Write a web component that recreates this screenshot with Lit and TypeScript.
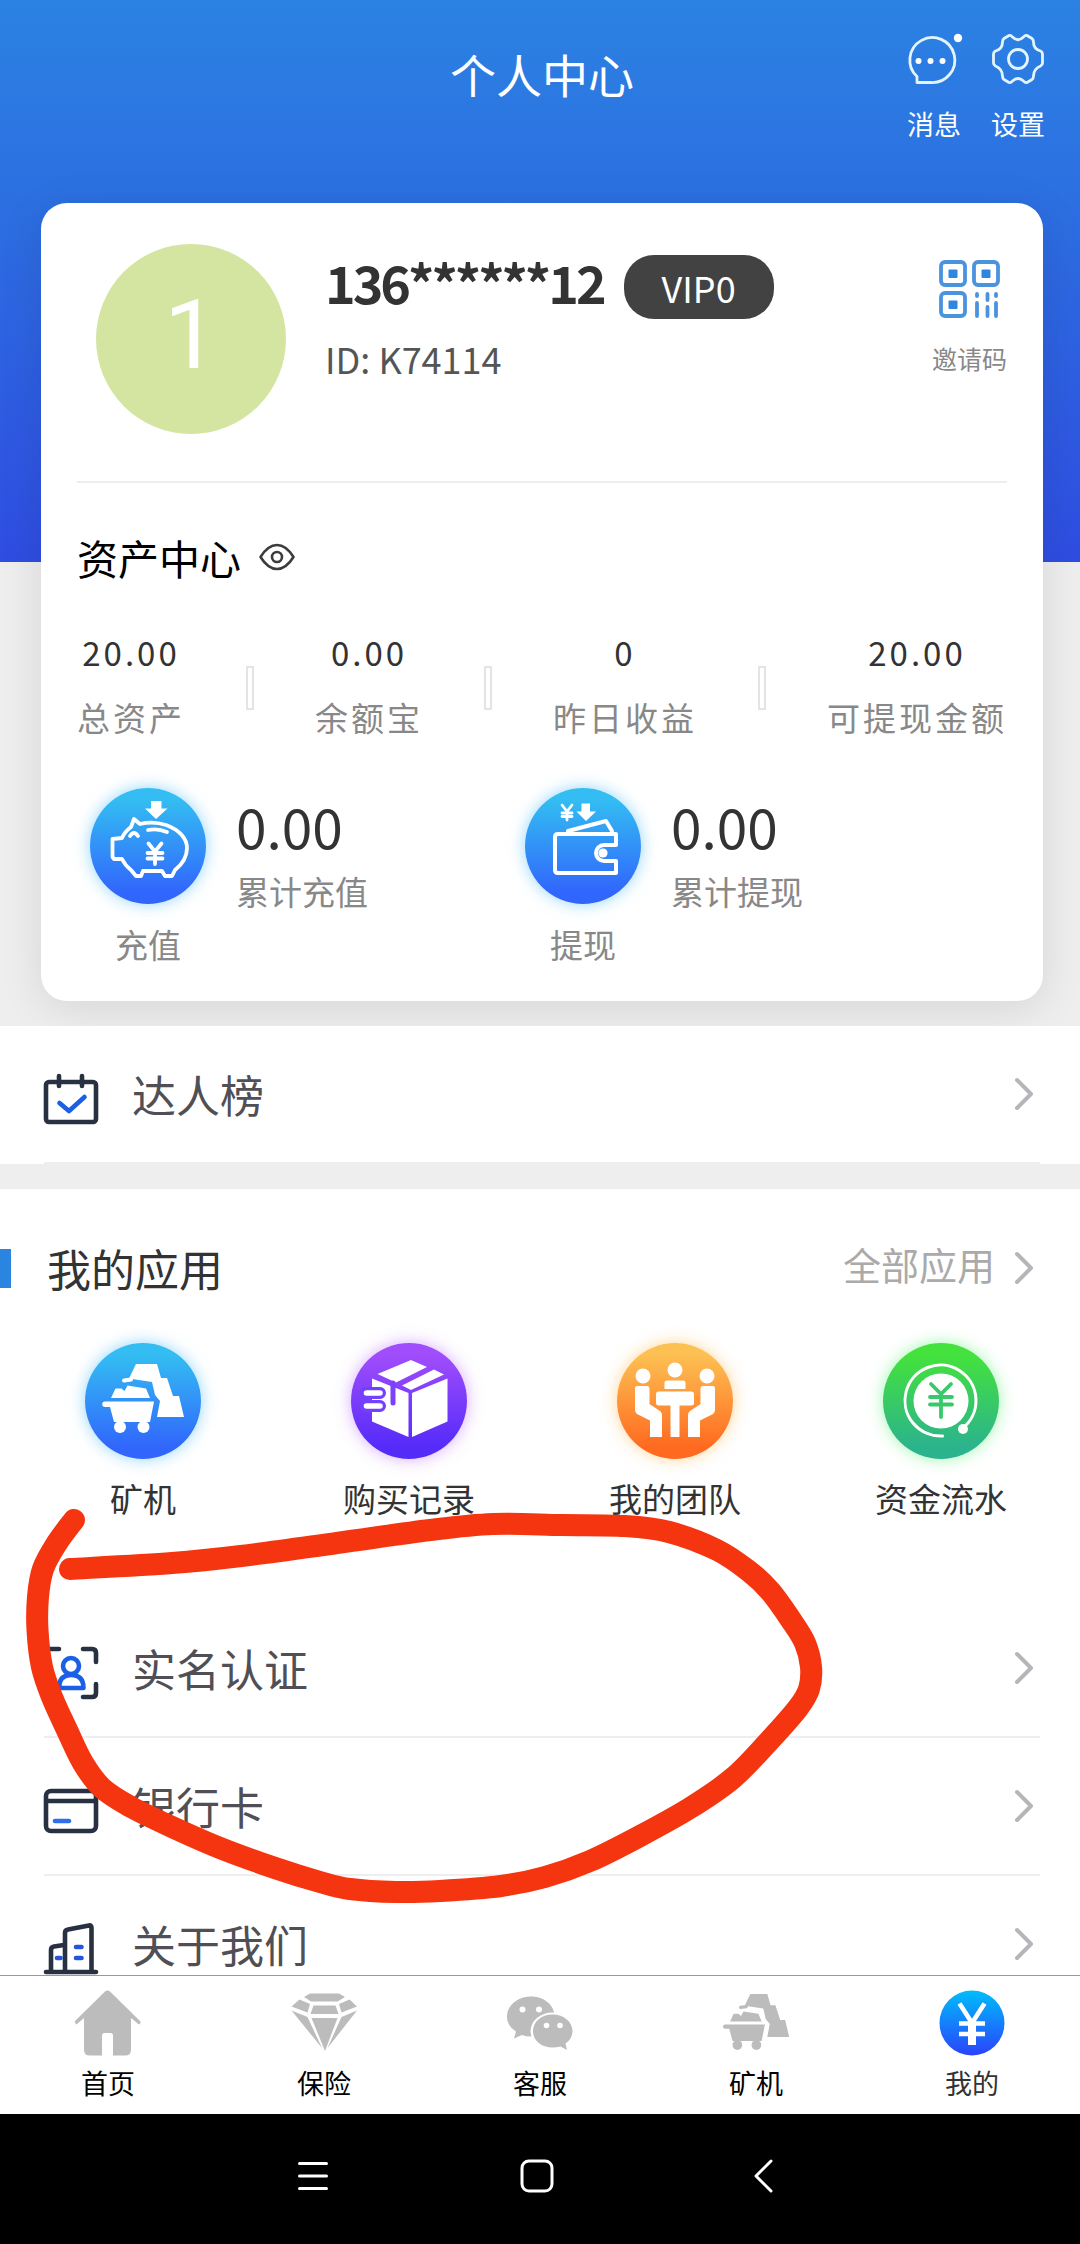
import { LitElement, html, svg, css, type SVGTemplateResult } from "lit";
import { customElement } from "lit/decorators.js";

/* ---------- icons ---------- */

const minerShape = svg`
  <path d="M51 21H72L76 35H82L88 53H94L99 74H72L75 58L70 52L67 39L44 35.500Z"/>
  <path d="M39 37.500L46 36.500" stroke="currentColor" stroke-width="4" stroke-linecap="round"/>
  <path d="M26 55L30.500 45.500H36.500L39.500 48L42.500 42.500L61 45.500L65 55Z"/>
  <path d="M20 58.500H69L65 79H29L25 64H20A2.700 2.700 0 0 1 20 58.500Z"/>
  <circle cx="35" cy="84" r="6"/><circle cx="58.500" cy="84" r="6"/>`;

const badge = (id: string, from: string, to: string, glyph: SVGTemplateResult) => html`
  <svg class="badge ${id}" viewBox="0 0 116 116" aria-hidden="true">
    <defs>
      <linearGradient id="g-${id}" x1="0" y1="0" x2="0" y2="1">
        <stop offset="0.1" stop-color=${from} /><stop offset="0.9" stop-color=${to} />
      </linearGradient>
    </defs>
    <circle cx="58" cy="58" r="58" fill="url(#g-${id})" />
    ${glyph}
  </svg>`;

const pigGlyph = svg`
  <g fill="none" stroke="#fff" stroke-width="3.800" stroke-linecap="round" stroke-linejoin="round">
    <path d="M44 31L50 36C58 34 67 34 76 37C90 42 97 51 97 60C97 70 90 78 85 82L82 88H75L72 83H53L51 88H46L41 82C37 79 34 75 32 71L24 71L22.500 69V51L32 50C34 45 37 42 41 39Z"/>
    <path d="M40 48Q44 42 48 48"/>
    <path d="M58 42Q68 40 77 44"/>
    <path d="M58.500 55.500L65 63.500L71.500 55.500M57.500 65H72.500M57.500 70.500H72.500M65 63.500V76"/>
  </g>
  <path d="M61 13H71.500V20.500H77.500L66 31L55 20.500H61Z" fill="#fff"/>`;

const walletGlyph = svg`
  <g fill="none" stroke="#fff" stroke-width="4" stroke-linecap="round" stroke-linejoin="round">
    <path d="M91 46H33Q30 46 30 49V82Q30 85 33 85H91V73H79A8 8 0 0 1 79 57H91Z"/>
    <path d="M43 43L81 33L87 43" />
    <path d="M37 17L42 23.500L47 17M37 25H47M37 28.500H47M42 23.500V32" stroke-width="2.800"/>
  </g>
  <circle cx="78" cy="65" r="4.600" fill="#fff"/>
  <path d="M56.500 15.500H65V23.500H71L61 33L51.500 23.500H56.500Z" fill="#fff"/>`;

const minerGlyph = svg`<g fill="#fff" color="#fff">${minerShape}</g>`;

const boxGlyph = svg`
  <g fill="#fff">
    <path d="M60 17L76 24L45 39.500L26.500 31Z"/>
    <path d="M83 26.500L93 31.500L60 47L51 42.500Z"/>
    <path d="M21 35.500L57.500 50V94L21 78.500Z"/>
    <path d="M61 50L96.500 35.500V78.500L61 94Z"/>
  </g>
  <path d="M42 40V60" stroke="#7d41fb" stroke-width="5" stroke-linecap="round"/>
  <path d="M15 50H29M15 63H29" stroke="#7340fb" stroke-width="12" stroke-linecap="round"/>
  <path d="M15.500 50H29M15.500 63H29" stroke="#fff" stroke-width="5.600" stroke-linecap="round"/>`;

const teamGlyph = svg`
  <g fill="#fff">
    <circle cx="26" cy="33" r="7.500"/><circle cx="58" cy="27" r="7.500"/><circle cx="90" cy="33" r="7.500"/>
    <path d="M47.500 46V40Q47.500 37.500 50 37.500H66Q68.500 37.500 68.500 40V46Z"/>
    <path d="M42 48.500H74Q77 48.500 77 51V60Q77 62.500 74 62.500H62.500V94H53.500V62.500H42Q39 62.500 39 60V51Q39 48.500 42 48.500Z"/>
    <path d="M20 43H30Q32 43 32.500 45V61L43 68Q45 69.500 45 72V94H33V77.500L20 71Q18 69.500 18 67V45Q18 43 20 43Z"/>
    <path d="M96 43H86Q84 43 83.500 45V61L73 68Q71 69.500 71 72V94H83V77.500L96 71Q98 69.500 98 67V45Q98 43 96 43Z"/>
  </g>`;

const flowGlyph = svg`
  <circle cx="58" cy="58" r="27.500" fill="#fff"/>
  <path d="M59.500 93A35.500 35.500 0 1 1 80 85" fill="none" stroke="#fff" stroke-width="3" stroke-linecap="round"/>
  <circle cx="80" cy="86" r="5" fill="#fff"/>
  <path d="M48 41L58 51L68 41M47 54H69M47 61.500H69M58 51V74" fill="none" stroke="#3ac96a" stroke-width="3.800" stroke-linecap="round"/>`;

const chevron = html`
  <svg class="chevron" viewBox="0 0 18 32" aria-hidden="true">
    <path d="M2 2L16 16L2 30" fill="none" stroke="#b6b6ba" stroke-width="4" stroke-linecap="round" stroke-linejoin="round" />
  </svg>`;

const rowIcon = (body: SVGTemplateResult) => html`
  <svg class="row-icon" viewBox="0 0 54 64" fill="none" stroke="#273142" stroke-width="4.600"
    stroke-linecap="round" stroke-linejoin="round" aria-hidden="true">${body}</svg>`;

const calendarIcon = rowIcon(svg`
  <rect x="2" y="20" width="50" height="40" rx="3"/><path d="M15 14V24M38 14V24"/>
  <path d="M15.500 41L25 49L40.500 35" stroke="#1a5fe6"/>`);
const identityIcon = rowIcon(svg`
  <path d="M15 13H6Q2 13 2 17V26M39 13H48Q52 13 52 17V26M15 61H6Q2 61 2 57V48M39 61H48Q52 61 52 57V48"/>
  <g stroke="#1a5fe6"><circle cx="27" cy="30" r="8"/><path d="M15 52Q15 39 27 39Q39.500 39 39.500 52Z"/></g>`);
const cardIcon = rowIcon(svg`
  <rect x="2" y="17" width="50" height="40" rx="5"/><path d="M3 27H51"/>
  <path d="M11 47H25" stroke="#2f6fec"/>`);
const buildingIcon = rowIcon(svg`
  <path d="M2 60H52M21 60V21Q21 18 24 17.500L45 13.500Q47.500 13 47.500 16V60M7 60V38Q7 35 10 34.500L20 33"/>
  <path d="M32 35H37.500M32 46H37.500M13 46H16.500" stroke="#2555d8"/>`);

const tabIcon = (body: SVGTemplateResult) => html`
  <svg class="tab-icon" viewBox="0 0 66 66" fill="#bcbcbc" color="#bcbcbc" aria-hidden="true">${body}</svg>`;

const homeTab = tabIcon(svg`
  <path d="M30 1.500Q32.500 -0.500 35 1.500L65 31Q66.500 33 64 34.500L56 28V60Q56 65.500 50 65.500H38V45.500Q38 43 35.500 43H29.500Q27 43 27 45.500V65.500H15Q9 65.500 9 60V28L1.500 34.500Q-0.500 33 0 31Z"/>`);
const diamondTab = tabIcon(svg`
  <path d="M19 3.500H48L54 7L46.500 11.500H20L13 7Z"/>
  <path d="M8.500 9.500L19 14L16.500 22.500L0.500 16.500ZM58.500 9.500L48 14L50.500 22.500L66 16.500Z"/>
  <path d="M22.500 15.500H44.500L47.500 24H19.500Z"/>
  <path d="M20.500 28H46.500L34 61Z"/>
  <path d="M0.500 20.500L16.500 27L31 58ZM66 20.500L50.500 27L36.500 58Z"/>`);
const chatTab = tabIcon(svg`
  <path d="M24 6.500C11 6.500 0 15 0 26.500C0 33 3.500 38 9 41.500L7 48.500L15 45Q19 46.500 24 46.500C37 46.500 47.500 38 47.500 26.500C47.500 15 37 6.500 24 6.500Z"/>
  <ellipse cx="45.500" cy="41" rx="22" ry="18.500" fill="#fff"/>
  <path d="M45.500 24.500C34 24.500 26 32 26 41C26 50.500 34 57.500 45.500 57.500Q50 57.500 53.500 56.500L60 60L58.500 53.500C63 50.500 65.500 46 65.500 41C65.500 32 57 24.500 45.500 24.500Z"/>
  <g fill="#fff"><circle cx="15.500" cy="19.500" r="3"/><circle cx="32" cy="19.500" r="3"/><circle cx="39.500" cy="35.500" r="2.800"/><circle cx="53" cy="35.500" r="2.800"/></g>`);
const minerTab = tabIcon(svg`<g transform="translate(-14 -13) scale(0.81)">${minerShape}</g>`);
const mineTab = tabIcon(svg`
  <defs><linearGradient id="g-mine" x1="0" y1="0" x2="0" y2="1"><stop offset="0" stop-color="#00bdfb"/><stop offset="1" stop-color="#2a43fb"/></linearGradient></defs>
  <circle cx="33" cy="33" r="32.500" fill="url(#g-mine)"/>
  <path d="M20.500 13.500L33 33L45.500 13.500M20 33.500H46M20 44H46" fill="none" stroke="#fff" stroke-width="4.600"/>
  <path d="M33 31V55" stroke="#fff" stroke-width="8"/>`);

/* ---------- hand-drawn marker ---------- */

const MARKER: [number, number][] = [
  [74, 20], [57, 43], [43, 69], [38, 97], [37.5, 130], [42, 167], [52, 197], [67, 230], [83, 263], [102, 288],
  [131, 307], [172, 327], [220, 348], [275, 368], [320, 382], [350, 389], [396, 392], [440, 391], [501, 386],
  [545, 377], [590, 361], [640, 336], [690, 308], [733, 278], [770, 240], [798, 208], [809, 189], [811, 167],
  [805, 143], [791, 120], [770, 91], [750, 72], [717, 50], [669, 32], [625, 26],
  [562, 25], [493, 24], [430, 30], [337, 43], [241, 56], [172, 63], [70, 69],
];

/** Catmull-Rom curve through the points, written as cubic segments. */
function smooth(points: [number, number][]): string {
  let d = `M${points[0][0]} ${points[0][1]}`;
  for (let i = 0; i < points.length - 1; i++) {
    const a = points[Math.max(i - 1, 0)];
    const b = points[i];
    const c = points[i + 1];
    const e = points[Math.min(i + 2, points.length - 1)];
    d += `C${b[0] + (c[0] - a[0]) / 6} ${b[1] + (c[1] - a[1]) / 6} ${c[0] - (e[0] - b[0]) / 6} ${c[1] - (e[1] - b[1]) / 6} ${c[0]} ${c[1]}`;
  }
  return d;
}

/* ---------- data ---------- */

const STATS = [
  { value: "20.00", label: "总资产" },
  { value: "0.00", label: "余额宝" },
  { value: "0", label: "昨日收益" },
  { value: "20.00", label: "可提现金额" },
];
const FUNDS = [
  { action: "充值", value: "0.00", label: "累计充值", icon: badge("blue", "#33bdf2", "#3166fc", pigGlyph) },
  { action: "提现", value: "0.00", label: "累计提现", icon: badge("blue", "#33bdf2", "#3166fc", walletGlyph) },
];
const APPS = [
  { label: "矿机", icon: badge("blue", "#33bdf2", "#3166fc", minerGlyph) },
  { label: "购买记录", icon: badge("purple", "#a04dfb", "#552bfa", boxGlyph) },
  { label: "我的团队", icon: badge("orange", "#fdc052", "#ff6a20", teamGlyph) },
  { label: "资金流水", icon: badge("green", "#44e23c", "#2bb38d", flowGlyph) },
];
const ROWS = [
  { label: "实名认证", icon: identityIcon },
  { label: "银行卡", icon: cardIcon },
  { label: "关于我们", icon: buildingIcon },
];
const TABS = [
  { label: "首页", icon: homeTab },
  { label: "保险", icon: diamondTab },
  { label: "客服", icon: chatTab },
  { label: "矿机", icon: minerTab },
  { label: "我的", icon: mineTab, current: true },
];

@customElement("app-root")
export class AppRoot extends LitElement {
  static styles = css`
    :host {
      display: flex;
      flex-direction: column;
      position: relative;
      height: 100vh;
      font-family: "Noto Sans CJK SC", "Noto Sans", sans-serif;
      color: #333;
    }
    * { box-sizing: border-box; }
    button {
      margin: 0;
      padding: 0;
      border: 0;
      background: none;
      font: inherit;
      color: inherit;
      text-align: inherit;
    }
    a { color: inherit; text-decoration: none; }
    h1, h2, p, dl, dd, dt { margin: 0; padding: 0; font-size: inherit; font-weight: 400; }
    svg { display: block; overflow: visible; }

    .page {
      flex: 1;
      min-height: 0;
      overflow: hidden auto;
      scrollbar-width: none;
      background: linear-gradient(#2b82e2, #2f4de1) 0 0 / 100% 562px no-repeat #eee;
    }
    .top {
      display: grid;
      grid-template-columns: 1fr auto 1fr;
      align-items: start;
      padding: 34px 35px 59px 39px;
      color: #fff;
    }
    .title { grid-column: 2; padding-top: 8px; font-size: 46px; line-height: 62px; }
    .actions { display: flex; justify-content: flex-end; gap: 30px; }
    .action { display: flex; flex-direction: column; align-items: center; gap: 20px; font-size: 27px; line-height: 40px; }
    .action svg { width: 54px; height: 50px; }

    .card {
      margin: 0 37px 25px 41px;
      padding: 41px 36px 35px;
      border-radius: 26px;
      background: #fff;
      box-shadow: 0 8px 44px rgba(0, 0, 0, 0.1);
    }
    .profile { display: flex; align-items: flex-start; padding: 0 0 47px 19px; border-bottom: 2px solid #eee; }
    .avatar {
      display: grid;
      place-items: center;
      width: 190px;
      height: 190px;
      border-radius: 50%;
      background: #d4e5a1;
      color: #fff;
      font-family: Roboto, sans-serif;
      font-size: 96px;
      line-height: 96px;
      padding-bottom: 8px;
    }
    .who { flex: 1; padding: 11px 0 0 39px; }
    .name-line { display: flex; align-items: center; gap: 20px; }
    .name { padding-bottom: 10px; font-size: 52px; line-height: 54px; font-weight: 700; letter-spacing: -3px; }
    .vip {
      padding: 0 38px;
      border-radius: 30px;
      background: #424242;
      color: #fff;
      font-size: 36px;
      line-height: 64px;
    }
    .uid { padding-top: 14px; font-size: 36px; line-height: 50px; color: #555; }
    .invite { display: flex; flex-direction: column; align-items: center; gap: 20px; padding-top: 16px; font-size: 25px; line-height: 40px; color: #888; }
    .invite svg { width: 62px; height: 58px; }

    .assets-head { display: flex; align-items: center; gap: 18px; padding-top: 44px; color: #000; font-size: 41px; line-height: 60px; }
    .eye svg { width: 36px; height: 28px; }
    .stats { display: flex; justify-content: space-between; align-items: center; padding-top: 43px; }
    .stat { display: flex; flex-direction: column-reverse; gap: 21px; text-align: center; font-size: 33px; line-height: 44px; letter-spacing: 3px; }
    .stat dt { color: #888; }
    .split { width: 8px; height: 44px; margin-top: 6px; border: 2px solid #e4e4e4; }

    .funds { display: grid; grid-template-columns: 1fr 1fr; padding: 49px 60px 0 13px; margin-right: -13px; }
    .fund { display: flex; align-items: flex-start; gap: 30px; color: #888; font-size: 33px; line-height: 44px; }
    .fund-action { display: flex; flex-direction: column; align-items: center; gap: 18px; }
    .fund-sum { display: flex; flex-direction: column-reverse; gap: 14px; padding-top: 7px; }
    .fund-sum dd { color: #333; font-size: 55px; line-height: 60px; }

    .badge { width: 116px; height: 116px; border-radius: 50%; box-shadow: 0 0 16px rgba(60, 180, 250, 0.55); }
    .badge.purple { box-shadow: 0 0 16px rgba(180, 90, 250, 0.5); }
    .badge.orange { box-shadow: 0 0 16px rgba(255, 180, 70, 0.55); }
    .badge.green { box-shadow: 0 0 16px rgba(80, 240, 110, 0.55); }

    .group { padding: 0 40px 0 44px; background: #fff; }
    .row {
      display: flex;
      align-items: center;
      gap: 34px;
      width: 100%;
      height: 138px;
      padding-right: 7px;
      border-bottom: 2px solid #eee;
      font-size: 44px;
      line-height: 64px;
      color: #4f4f55;
    }
    .row-label { flex: 1; }
    .row-icon { width: 54px; height: 64px; }
    .chevron { width: 18px; height: 32px; }

    .apps { margin-top: 25px; padding: 49px 0 80px; background: #fff; }
    .apps-head { display: flex; align-items: center; justify-content: space-between; padding-right: 47px; }
    .apps-title { display: flex; align-items: center; gap: 36px; font-size: 44px; line-height: 60px; }
    .apps-title::before { content: ""; width: 11px; height: 39px; background: #2b85e0; }
    .all { display: flex; align-items: center; gap: 20px; font-size: 38px; line-height: 52px; color: #aaa; }
    .all-label { padding-bottom: 8px; }
    .app-grid { display: grid; grid-template-columns: repeat(4, 1fr); padding: 45px 6px 0 10px; }
    .app { display: flex; flex-direction: column; align-items: center; gap: 17px; width: 100%; font-size: 33px; line-height: 44px; }

    .tabs { display: grid; grid-template-columns: repeat(5, 1fr); height: 139px; border-top: 1px solid #999; background: #fff; }
    .tab { display: flex; flex-direction: column; align-items: center; gap: 7px; padding-top: 14px; color: #000; font-size: 27px; line-height: 40px; }
    .tab.current { color: #333; }
    .tab-icon { width: 66px; height: 66px; }

    .system { display: flex; justify-content: center; align-items: center; gap: 190px; height: 130px; padding: 0 6px 6px 0; background: #000; }
    .system svg { width: 34px; height: 34px; fill: none; stroke: #fff; stroke-width: 3px; stroke-linecap: round; stroke-linejoin: round; }

    .marker { position: absolute; top: 1500px; left: 0; width: 100%; pointer-events: none; }
  `;

  render() {
    return html`
      <main class="page">
        <header class="top">
          <h1 class="title">个人中心</h1>
          <div class="actions">
            <button class="action">
              <svg viewBox="0 0 54 50" fill="none" stroke="#e4f4ff" stroke-width="2.800" stroke-linejoin="round" aria-hidden="true">
                <path d="M10 48.500V42.500A22.500 22.500 0 1 1 24 48.500Z" />
                <g fill="#fff" stroke="none"><circle cx="11.500" cy="27" r="3" /><circle cx="23.500" cy="27" r="3" /><circle cx="35.500" cy="27" r="3" /><circle cx="51" cy="4" r="4.200" /></g>
              </svg>
              消息
            </button>
            <button class="action">
              <svg viewBox="0 0 54 50" fill="none" stroke="#e4f4ff" stroke-width="2.800" stroke-linejoin="round" aria-hidden="true">
                <path d="M18 1.500Q20 1 21.500 3Q27 8.500 32.500 3Q34 1 36 1.500L41 4.500Q42.500 5.500 42.500 8Q42.500 15 49.500 17Q51.500 18 51.500 20V29Q51.500 31 49.500 32Q42.500 35 42.500 42Q42.500 44.500 41 45.500L36 48.500Q34 49 32.500 47Q27 42 21.500 47Q20 49 18 48.500L13 45.500Q11.500 44.500 11.500 42Q11.500 35 4.500 32Q2.500 31 2.500 29V20Q2.500 18 4.500 17Q11.500 15 11.500 8Q11.500 5.500 13 4.500Z" />
                <circle cx="27" cy="25" r="9.500" />
              </svg>
              设置
            </button>
          </div>
        </header>

        <section class="card">
          <div class="profile">
            <div class="avatar">1</div>
            <div class="who">
              <div class="name-line"><span class="name">136******12</span><span class="vip">VIP0</span></div>
              <p class="uid">ID: K74114</p>
            </div>
            <button class="invite">
              <svg viewBox="0 0 62 58" fill="none" stroke="#4a93de" stroke-width="3.800" stroke-linecap="round" aria-hidden="true">
                <rect x="3" y="2" width="24" height="23" rx="4" /><rect x="36" y="2" width="24" height="23" rx="4" /><rect x="3" y="33" width="24" height="23" rx="4" />
                <path d="M39 34V36M39 43V56M49.500 34V40M49.500 47V56M58 34V36M58 43V56" />
                <g fill="#2f86e0" stroke="none"><rect x="10.500" y="9.500" width="9" height="8.500" rx="1" /><rect x="43.500" y="9.500" width="9" height="8.500" rx="1" /><rect x="10.500" y="40.500" width="9" height="8.500" rx="1" /></g>
              </svg>
              邀请码
            </button>
          </div>

          <div class="assets-head">
            <h2>资产中心</h2>
            <button class="eye" aria-label="显示或隐藏金额">
              <svg viewBox="0 0 36 28" fill="none" stroke="#3c3c3c" stroke-width="2.600" stroke-linejoin="round" aria-hidden="true">
                <path d="M1.500 14Q9 2 18 2Q27 2 34.500 14Q27 26 18 26Q9 26 1.500 14Z" /><circle cx="18" cy="14" r="5" />
              </svg>
            </button>
          </div>

          <div class="stats">
            ${STATS.map((s, i) => html`
              ${i ? html`<span class="split"></span>` : ""}
              <dl class="stat"><dt>${s.label}</dt><dd>${s.value}</dd></dl>`)}
          </div>

          <div class="funds">
            ${FUNDS.map((f) => html`
              <div class="fund">
                <button class="fund-action">${f.icon}${f.action}</button>
                <dl class="fund-sum"><dt>${f.label}</dt><dd>${f.value}</dd></dl>
              </div>`)}
          </div>
        </section>

        <div class="group">
          <button class="row">${calendarIcon}<span class="row-label">达人榜</span>${chevron}</button>
        </div>

        <section class="apps">
          <div class="apps-head">
            <h2 class="apps-title">我的应用</h2>
            <a class="all" href="#apps"><span class="all-label">全部应用</span>${chevron}</a>
          </div>
          <div class="app-grid">
            ${APPS.map((a) => html`<button class="app">${a.icon}${a.label}</button>`)}
          </div>
        </section>

        <div class="group">
          ${ROWS.map((r) => html`<button class="row">${r.icon}<span class="row-label">${r.label}</span>${chevron}</button>`)}
        </div>
      </main>

      <nav class="tabs">
        ${TABS.map((t) => html`<a class="tab ${t.current ? "current" : ""}" href="#${t.label}">${t.icon}${t.label}</a>`)}
      </nav>

      <div class="system">
        <button aria-label="菜单"><svg viewBox="0 0 34 34"><path d="M3.500 4.500H30.500M3.500 17H30.500M3.500 29.500H30.500" /></svg></button>
        <button aria-label="主屏幕"><svg viewBox="0 0 34 34"><rect x="2" y="2" width="30" height="30" rx="7" /></svg></button>
        <button aria-label="返回"><svg viewBox="0 0 34 34"><path d="M27 2L12 17L27 32" /></svg></button>
      </div>

      <svg class="marker" viewBox="0 0 1080 420" fill="none" aria-hidden="true">
        <path d=${smooth(MARKER)} stroke="#f5350f" stroke-width="22" stroke-linecap="round" stroke-linejoin="round" />
      </svg>
    `;
  }
}
